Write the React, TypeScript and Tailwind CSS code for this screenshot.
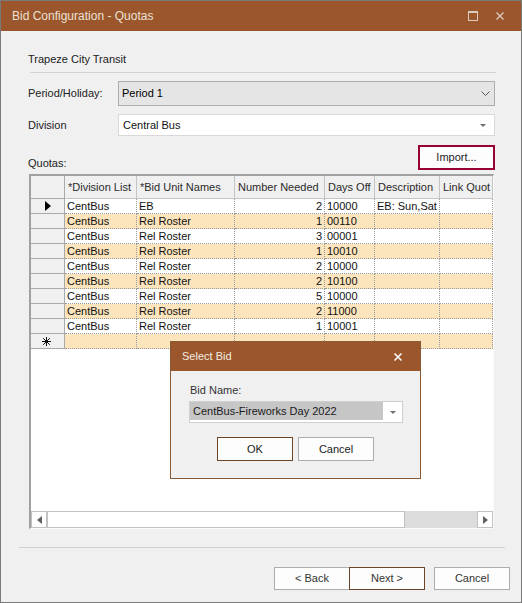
import React from 'react';

type Row = { div: string; unit: string; num: string; days: string; desc: string };

const rows: Row[] = [
    { div: 'CentBus', unit: 'EB', num: '2', days: '10000', desc: 'EB: Sun,Sat' },
    { div: 'CentBus', unit: 'Rel Roster', num: '1', days: '00110', desc: '' },
    { div: 'CentBus', unit: 'Rel Roster', num: '3', days: '00001', desc: '' },
    { div: 'CentBus', unit: 'Rel Roster', num: '1', days: '10010', desc: '' },
    { div: 'CentBus', unit: 'Rel Roster', num: '2', days: '10000', desc: '' },
    { div: 'CentBus', unit: 'Rel Roster', num: '2', days: '10100', desc: '' },
    { div: 'CentBus', unit: 'Rel Roster', num: '5', days: '10000', desc: '' },
    { div: 'CentBus', unit: 'Rel Roster', num: '2', days: '11000', desc: '' },
    { div: 'CentBus', unit: 'Rel Roster', num: '1', days: '10001', desc: '' },
];

const headers = [
    { label: '*Division List', w: 'w-[72px]' },
    { label: '*Bid Unit Names', w: 'w-[98px]' },
    { label: 'Number Needed', w: 'w-[90px]' },
    { label: 'Days Off', w: 'w-[50px]' },
    { label: 'Description', w: 'w-[65px]' },
    { label: 'Link Quot', w: 'w-[53px]' },
];

const cell = 'h-[15px] shrink-0 overflow-hidden whitespace-nowrap border-r border-b border-dotted border-[#9a9a9a] px-[2px] leading-[14px]';

function NewRowMark() {
    return (
        <svg width="9" height="9" viewBox="0 0 9 9" stroke="#111" strokeWidth="1">
            <line x1="4.5" y1="0" x2="4.5" y2="9" />
            <line x1="0" y1="4.5" x2="9" y2="4.5" />
            <line x1="1.2" y1="1.2" x2="7.8" y2="7.8" />
            <line x1="7.8" y1="1.2" x2="1.2" y2="7.8" />
        </svg>
    );
}

function QuotaGrid() {
    return (
        <div className="ml-[1px] mt-[4px] flex h-[355px] w-[465px] flex-col border-t-2 border-l-2 border-r border-b border-t-[#a0a0a0] border-l-[#a0a0a0] border-r-[#fafafa] border-b-[#fafafa] bg-white">
            {/* header */}
            <div className="flex h-[23px] shrink-0">
                <div className="w-[34px] shrink-0 border-r border-b border-[#a9a9a9] bg-[#f0f0f0]" />
                {headers.map((h) => (
                    <div
                        key={h.label}
                        className={`${h.w} shrink-0 overflow-hidden whitespace-nowrap border-r border-b border-[#c4c4c4] bg-[#f0f0f0] px-[3px] leading-[22px] text-[#2a2a2a]`}
                    >
                        {h.label}
                    </div>
                ))}
            </div>

            {rows.map((r, i) => (
                <div key={i} className={`flex h-[15px] shrink-0 ${i % 2 === 1 ? 'bg-[#fce4bc]' : 'bg-white'}`}>
                    <div className="flex h-[15px] w-[34px] shrink-0 items-center justify-center border-r border-b border-[#a9a9a9] bg-[#f0f0f0]">
                        {i === 0 && (
                            <svg width="6" height="10" viewBox="0 0 6 10">
                                <path d="M0 0 L6 5 L0 10 Z" fill="#000" />
                            </svg>
                        )}
                    </div>
                    <div className={`${cell} w-[72px]`}>{r.div}</div>
                    <div className={`${cell} w-[98px]`}>{r.unit}</div>
                    <div className={`${cell} w-[90px] text-right`}>{r.num}</div>
                    <div className={`${cell} w-[50px]`}>{r.days}</div>
                    <div className={`${cell} w-[65px]`}>{r.desc}</div>
                    <div className={`${cell} w-[53px]`} />
                </div>
            ))}

            {/* new row */}
            <div className="flex h-[15px] shrink-0 bg-[#fce4bc]">
                <div className="flex h-[15px] w-[34px] shrink-0 items-center justify-center border-r border-b border-[#a9a9a9] bg-[#f0f0f0] pr-[3px]">
                    <NewRowMark />
                </div>
                <div className={`${cell} w-[72px]`} />
                <div className={`${cell} w-[98px]`} />
                <div className={`${cell} w-[90px]`} />
                <div className={`${cell} w-[50px]`} />
                <div className={`${cell} w-[65px]`} />
                <div className={`${cell} w-[53px]`} />
            </div>

            <div className="flex-1 bg-white" />

            {/* horizontal scrollbar */}
            <div className="flex h-[17px] shrink-0">
                <div className="flex w-[16px] items-center justify-center border border-[#c2c2c2] bg-white">
                    <svg width="5" height="8" viewBox="0 0 5 8">
                        <path d="M5 0 L0 4 L5 8 Z" fill="#606060" />
                    </svg>
                </div>
                <div className="w-[358px] border border-[#c2c2c2] bg-white" />
                <div className="flex-1 bg-[#dcdcdc]" />
                <div className="flex w-[16px] items-center justify-center border border-[#c2c2c2] bg-white">
                    <svg width="5" height="8" viewBox="0 0 5 8">
                        <path d="M0 0 L5 4 L0 8 Z" fill="#606060" />
                    </svg>
                </div>
            </div>
        </div>
    );
}

function SelectBidDialog() {
    return (
        <div className="absolute left-[169px] top-[340px] flex h-[138px] w-[251px] flex-col border border-[#8a5a34] bg-[#f0f0f0]">
            <div className="flex h-[29px] shrink-0 items-center justify-between bg-[#9b572b] pl-[11px] pr-[18px] text-[#f4ece4]">
                <span>Select Bid</span>
                <svg width="8" height="8" viewBox="0 0 8 8" stroke="#ffffff" strokeWidth="1.5">
                    <line x1="0.5" y1="0.5" x2="7.5" y2="7.5" />
                    <line x1="7.5" y1="0.5" x2="0.5" y2="7.5" />
                </svg>
            </div>
            <div className="flex flex-col px-[18px] pt-[12px]">
                <div className="pl-[1px] leading-[14px] text-[#333]">Bid Name:</div>
                <div className="mt-[4px] flex h-[22px] w-[214px] items-start border border-[#d0d0d0] bg-white">
                    <div className="flex h-[18px] w-[193px] items-center bg-[#c6c6c6] pl-[3px] text-[#1a1a1a]">
                        CentBus-Fireworks Day 2022
                    </div>
                    <div className="flex h-[20px] flex-1 items-center justify-center">
                        <svg width="6" height="3" viewBox="0 0 6 3">
                            <path d="M0 0 L6 0 L3 3 Z" fill="#707070" />
                        </svg>
                    </div>
                </div>
                <div className="mt-[14px] flex justify-center gap-[5px]">
                    <button className="h-[24px] w-[76px] border border-[#6e4424] bg-[#fdfdfd] text-[#222]">OK</button>
                    <button className="h-[24px] w-[76px] border border-[#adadad] bg-[#fdfdfd] text-[#222]">Cancel</button>
                </div>
            </div>
        </div>
    );
}

export default function App() {
    return (
        <div className="relative flex h-[603px] w-[522px] flex-col border border-[#7a7a7a] bg-[#f0f0f0] font-['Liberation_Sans',Arial,sans-serif] text-[11px] text-[#111]">
            {/* title bar */}
            <div className="flex h-[30px] shrink-0 items-center justify-between bg-[#9b572b] pl-[11px] pr-[17px] text-[12px] text-[#ebe0d6]">
                <span>Bid Configuration - Quotas</span>
                <div className="flex items-center gap-[18px]">
                    <div className="h-[10px] w-[10px] border border-t-2 border-[#d8ccc2]" />
                    <svg width="8" height="8" viewBox="0 0 8 8" stroke="#d8ccc2" strokeWidth="1.2">
                        <line x1="0.5" y1="0.5" x2="7.5" y2="7.5" />
                        <line x1="7.5" y1="0.5" x2="0.5" y2="7.5" />
                    </svg>
                </div>
            </div>

            <div className="flex flex-col pl-[27px] pr-[26px] pt-[21px]">
                <div className="leading-[15px] text-[#222]">Trapeze City Transit</div>
                <div className="ml-[2px] mt-[5px] h-px w-[466px] bg-[#d4d4d4]" />

                <div className="mt-[8px] flex h-[25px] items-center">
                    <div className="w-[90px] text-[#222]">Period/Holiday:</div>
                    <div className="flex h-[25px] flex-1 items-center justify-between border border-[#adadad] bg-[#e5e5e5] pl-[3px] pr-[4px] text-[#000]">
                        <span>Period 1</span>
                        <svg width="9" height="5" viewBox="0 0 9 5" fill="none" stroke="#555" strokeWidth="1">
                            <polyline points="0.5,0.5 4.5,4.5 8.5,0.5" />
                        </svg>
                    </div>
                </div>

                <div className="mt-[8px] flex h-[22px] items-center">
                    <div className="w-[90px] text-[#222]">Division</div>
                    <div className="flex h-[22px] flex-1 items-center justify-between border border-[#d9d9d9] bg-white pl-[4px] pr-[8px] text-[#111]">
                        <span>Central Bus</span>
                        <svg width="6" height="3" viewBox="0 0 6 3">
                            <path d="M0 0 L6 0 L3 3 Z" fill="#6d6d6d" />
                        </svg>
                    </div>
                </div>

                <div className="mt-[9px] flex items-end justify-between">
                    <div className="leading-[14px] text-[#222]">Quotas:</div>
                    <button className="h-[25px] w-[77px] border-2 border-[#990033] bg-[#fdfdfd] text-[#222]">Import...</button>
                </div>

                <QuotaGrid />
            </div>

            <div className="ml-[18px] mr-[16px] mt-[18px] h-px bg-[#d0d0d0]" />
            <div className="mt-[19px] flex justify-end pr-[11px]">
                <button className="h-[23px] w-[76px] border border-[#adadad] bg-[#fdfdfd] text-[#333]">&lt; Back</button>
                <button className="-ml-px h-[23px] w-[76px] border border-[#6b4429] bg-[#fdfdfd] text-[#333]">Next &gt;</button>
                <button className="ml-[9px] h-[23px] w-[76px] border border-[#adadad] bg-[#fdfdfd] text-[#333]">Cancel</button>
            </div>

            <SelectBidDialog />
        </div>
    );
}
